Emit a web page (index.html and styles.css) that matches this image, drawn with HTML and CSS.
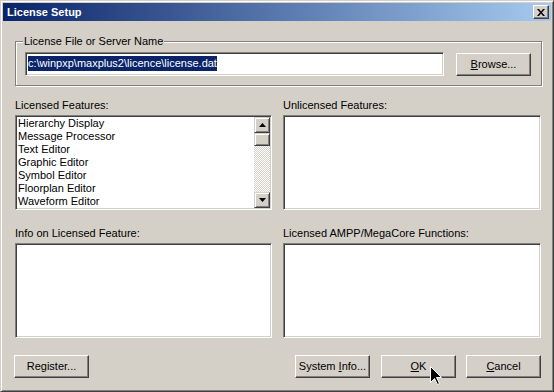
FILE: index.html
```html
<!DOCTYPE html>
<html lang="en">
<head>
  <meta charset="UTF-8">
  <title>License Setup</title>
  <link rel="stylesheet" href="styles.css">
</head>
<body>

  <div class="window">
    <div class="titlebar">
      <span class="title">License Setup</span>
      <div class="close">
        <svg width="8" height="7" viewBox="0 0 8 7">
          <path d="M0 0h2l2 2.5L6 0h2L5 3.5 8 7H6L4 4.5 2 7H0l3-3.5z" fill="#000"/>
        </svg>
      </div>
    </div>

    <div class="client">
      <fieldset class="group">
        <legend>License File or Server Name</legend>
        <div class="path-row">
          <div class="edit"><span class="sel">c:\winpxp\maxplus2\licence\license.dat</span></div>
          <div class="btn"><span><u>B</u>rowse...</span></div>
        </div>
      </fieldset>

      <div class="panes">
        <div class="pane">
          <div class="label">Licensed Features:</div>
          <div class="listbox">
            <div class="items">
              <div class="item">Hierarchy Display</div>
              <div class="item">Message Processor</div>
              <div class="item">Text Editor</div>
              <div class="item">Graphic Editor</div>
              <div class="item">Symbol Editor</div>
              <div class="item">Floorplan Editor</div>
              <div class="item">Waveform Editor</div>
            </div>
            <div class="scrollbar">
              <div class="sb-btn">
                <svg width="7" height="4" viewBox="0 0 7 4"><path d="M3.5 0L7 4H0z" fill="#000"/></svg>
              </div>
              <div class="sb-thumb"></div>
              <div class="sb-track"></div>
              <div class="sb-btn">
                <svg width="7" height="4" viewBox="0 0 7 4"><path d="M0 0h7L3.5 4z" fill="#000"/></svg>
              </div>
            </div>
          </div>
        </div>
        <div class="pane">
          <div class="label">Unlicensed Features:</div>
          <div class="listbox"></div>
        </div>
        <div class="pane">
          <div class="label">Info on Licensed Feature:</div>
          <div class="listbox"></div>
        </div>
        <div class="pane">
          <div class="label">Licensed AMPP/MegaCore Functions:</div>
          <div class="listbox"></div>
        </div>
      </div>

      <div class="buttons">
        <div class="btn register"><span>Register...</span></div>
        <div class="spacer"></div>
        <div class="btn"><span>System <u>I</u>nfo...</span></div>
        <div class="btn ok"><span><u>O</u>K</span></div>
        <div class="btn cancel"><span><u>C</u>ancel</span></div>
      </div>
    </div>

    <svg class="cursor" width="12" height="19" viewBox="0 0 12 19">
      <path d="M0.5 0.5V16.5L4.5 12.5L7.5 18.5L9.5 17.5L6.5 11.5H11.5z" fill="#000" stroke="#fff" stroke-width="1"/>
    </svg>
  </div>

</body>
</html>
```

FILE: styles.css
```css
* { margin: 0; padding: 0; box-sizing: border-box; }
html, body {
  width: 554px;
  height: 392px;
  overflow: hidden;
  background-color: #d4d0c8;
  font-family: 'Liberation Sans', Arial, sans-serif;
  font-size: 11px;
  line-height: 13px;
  color: #000;
}
.window {
  position: relative;
  width: 554px;
  height: 392px;
  display: flex;
  flex-direction: column;
  padding: 2px;
  border: 1px solid;
  border-color: #d4d0c8 #404040 #404040 #d4d0c8;
  box-shadow: inset 1px 1px #fff, inset -1px -1px #808080;
}
.titlebar {
  height: 18px;
  display: flex;
  align-items: center;
  padding: 0 2px;
  background: linear-gradient(to right, #0a246a, #a6caf0);
}
.title {
  flex: 1;
  padding-left: 2px;
  color: #fff;
  font-weight: bold;
}
.close {
  width: 16px;
  height: 14px;
  display: flex;
  align-items: center;
  justify-content: center;
  background-color: #d4d0c8;
  border: 1px solid;
  border-color: #fff #404040 #404040 #fff;
  box-shadow: inset -1px -1px #808080;
}
.client {
  flex: 1;
  padding: 14px 9px 0 12px;
  display: flex;
  flex-direction: column;
}
.group {
  border: 1px solid #808080;
  box-shadow: 1px 1px #fff, inset 1px 1px #fff;
  padding: 4px 10px 9px 9px;
}
.group legend {
  margin-left: -2px;
  padding: 0 1px;
  background-color: #d4d0c8;
}
.path-row {
  display: flex;
  align-items: flex-end;
  justify-content: space-between;
}
.edit {
  width: 419px;
  height: 24px;
  padding: 3px 0 0 2px;
  background-color: #fff;
  border: 1px solid;
  border-color: #808080 #fff #fff #808080;
  box-shadow: inset 1px 1px #404040, inset -1px -1px #d4d0c8;
}
.sel {
  display: inline-block;
  padding: 1px 0;
  background-color: #0a246a;
  color: #fff;
}
.btn {
  width: 75px;
  height: 23px;
  display: flex;
  align-items: center;
  justify-content: center;
  background-color: #d4d0c8;
  border: 1px solid;
  border-color: #fff #404040 #404040 #fff;
  box-shadow: inset -1px -1px #808080;
}
.panes {
  margin-top: 13px;
  display: grid;
  grid-template-columns: 257px 258px;
  column-gap: 11px;
  row-gap: 17px;
}
.label {
  margin-bottom: 3px;
}
.listbox {
  height: 95px;
  display: flex;
  background-color: #fff;
  border: 1px solid;
  border-color: #808080 #fff #fff #808080;
  box-shadow: inset 1px 1px #404040, inset -1px -1px #d4d0c8;
  padding: 1px;
}
.items {
  flex: 1;
  padding-left: 1px;
  overflow: hidden;
}
.item {
  height: 13px;
  white-space: nowrap;
}
.scrollbar {
  width: 16px;
  display: flex;
  flex-direction: column;
}
.sb-btn, .sb-thumb {
  height: 16px;
  display: flex;
  align-items: center;
  justify-content: center;
  background-color: #d4d0c8;
  border: 1px solid;
  border-color: #d4d0c8 #404040 #404040 #d4d0c8;
  box-shadow: inset 1px 1px #fff, inset -1px -1px #808080;
}
.sb-thumb {
  height: 13px;
}
.sb-track {
  flex: 1;
  background: repeating-conic-gradient(#d4d0c8 0 25%, #fff 0 50%) 0 0 / 2px 2px;
}
.buttons {
  margin-top: 17px;
  display: flex;
}
.register { margin-left: -1px; }
.spacer { flex: 1; }
.ok { margin-left: 11px; }
.cancel { margin-left: 10px; margin-right: 1px; }
.cursor {
  position: absolute;
  left: 429px;
  top: 365px;
}
```
